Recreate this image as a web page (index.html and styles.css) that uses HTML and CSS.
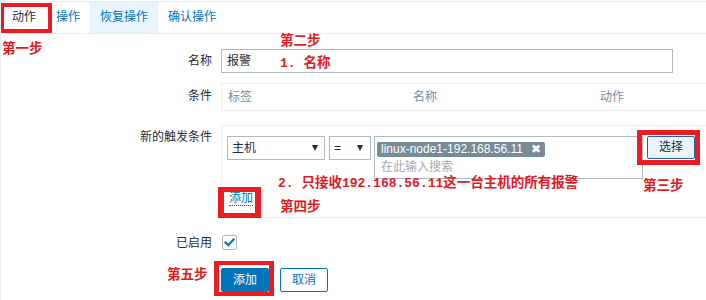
FILE: index.html
```html
<!DOCTYPE html>
<html lang="zh-CN">
<head>
<meta charset="utf-8">
<title>动作</title>
<link rel="stylesheet" href="styles.css">
</head>
<body>
<div class="page">
  <ul class="tabs">
    <li class="tab active">动作</li>
    <li class="tab">操作</li>
    <li class="tab hover">恢复操作</li>
    <li class="tab">确认操作</li>
  </ul>

  <div class="form">
    <div class="row row-name">
      <div class="label">名称</div>
      <div class="field">
        <div class="text-input">报警</div>
      </div>
    </div>

    <div class="row row-cond">
      <div class="label">条件</div>
      <div class="field">
        <div class="cond-table">
          <span class="col col-tag">标签</span>
          <span class="col col-name">名称</span>
          <span class="col col-act">动作</span>
        </div>
      </div>
    </div>

    <div class="row row-new">
      <div class="label">新的触发条件</div>
      <div class="field">
        <div class="new-box">
          <div class="new-line">
            <div class="select sel-type">主机<span class="arrow"></span></div>
            <div class="select sel-op">=<span class="arrow"></span></div>
            <div class="multi">
              <span class="tag">linux-node1-192.168.56.11<span class="tag-x">✖</span></span>
              <div class="placeholder">在此输入搜索</div>
            </div>
            <div class="btn-select">选择</div>
          </div>
          <a class="link-add">添加</a>
        </div>
      </div>
    </div>

    <div class="row row-enabled">
      <div class="label">已启用</div>
      <div class="field">
        <span class="checkbox">
          <svg width="13" height="13" viewBox="0 0 13 13"><polyline points="2.5,6.5 5.2,9.2 10.5,3.6" fill="none" stroke="#0275b8" stroke-width="2.2" stroke-linecap="square"/></svg>
        </span>
      </div>
    </div>

    <div class="row row-buttons">
      <div class="label"></div>
      <div class="field buttons">
        <div class="btn btn-primary">添加</div>
        <div class="btn btn-alt">取消</div>
      </div>
    </div>
  </div>

  <div class="note note-1">第一步</div>
  <div class="note note-2">第二步</div>
  <div class="note note-name"><span class="mono">1. </span>名称</div>
  <div class="note note-host"><span class="mono">2. </span>只接收<span class="mono">192.168.56.11</span>这一台主机的所有报警</div>
  <div class="note note-3">第三步</div>
  <div class="note note-4">第四步</div>
  <div class="note note-5">第五步</div>

  <div class="redbox rb-tab"></div>
  <div class="redbox rb-select"></div>
  <div class="redbox rb-link"></div>
  <div class="redbox rb-submit"></div>
</div>
</body>
</html>
```

FILE: styles.css
```css
html, body {
  margin: 0;
  padding: 0;
  background: #ffffff;
  overflow: hidden;
}

body {
  font-family: "Liberation Sans", Arial, "Noto Sans CJK SC", sans-serif;
  font-size: 12px;
  color: #1f2c33;
}

.page {
  position: relative;
  width: 706px;
  height: 300px;
  overflow: hidden;
  border-left: 1px solid #ebeef0;
  box-sizing: border-box;
}

/* tabs */
.tabs {
  list-style: none;
  margin: 1px 0 0 0;
  padding: 0 0 0 1px;
  display: flex;
  border-top: 1px solid #ebeef0;
  border-bottom: 1px solid #ebeef0;
  height: 31px;
}

.tab {
  padding: 0 10px;
  line-height: 31px;
  color: #0275b8;
}

.tab.active {
  color: #1f2c33;
}

.tab.hover {
  background: #e8f5ff;
}

/* form rows */
.form {
  padding-top: 15px;
}

.row {
  display: grid;
  grid-template-columns: 211px 520px;
  column-gap: 9px;
  align-items: start;
}

.label {
  text-align: right;
  line-height: 14px;
  padding-top: 5px;
}

.row-cond {
  margin-top: 10px;
}

.row-cond .label {
  padding-top: 6px;
}

.row-new {
  margin-top: 14px;
}

.row-new .label {
  padding-top: 5px;
}

.row-enabled {
  margin-top: 17px;
  align-items: center;
}

.row-enabled .label {
  padding-top: 0;
  line-height: 15px;
}

.row-buttons {
  margin-top: 16px;
}

.text-input {
  width: 452px;
  height: 24px;
  box-sizing: border-box;
  border: 1px solid #acbbc2;
  padding: 0 5px;
  line-height: 22px;
}

/* conditions table */
.cond-table {
  height: 28px;
  box-sizing: border-box;
  border: 1px solid #ebeef0;
  border-right: 0;
  display: flex;
  line-height: 26px;
  color: #768d99;
}

.col {
  padding-left: 6px;
}

.col-tag { width: 179px; }
.col-name { width: 181px; }
.col-act { width: 100px; }

/* new condition box */
.new-box {
  height: 93px;
  box-sizing: border-box;
  border: 1px solid #ebeef0;
  border-right: 0;
  padding: 10px 0 0 5px;
}

.new-line {
  display: flex;
  align-items: flex-start;
}

.select {
  position: relative;
  height: 24px;
  box-sizing: border-box;
  border: 1px solid #acbbc2;
  line-height: 22px;
  padding-left: 4px;
}

.sel-type {
  width: 98px;
}

.sel-op {
  width: 42px;
  margin-left: 4px;
}

.arrow {
  position: absolute;
  top: 8px;
  right: 6px;
  width: 0;
  height: 0;
  border-left: 3px solid transparent;
  border-right: 3px solid transparent;
  border-top: 6px solid #1f2c33;
}

.sel-op .arrow {
  right: 7px;
}

.multi {
  width: 269px;
  height: 43px;
  box-sizing: border-box;
  border: 1px solid #acbbc2;
  margin-left: 3px;
  padding: 5px 0 0 2px;
}

.tag {
  display: inline-block;
  height: 15px;
  line-height: 15px;
  background: #768d99;
  color: #ffffff;
  border-radius: 2px;
  padding: 0 4px 0 4px;
  vertical-align: top;
}

.tag-x {
  margin-left: 8px;
  font-family: "DejaVu Sans", sans-serif;
  font-size: 12px;
  line-height: 15px;
}

.placeholder {
  color: #a2acb1;
  line-height: 14px;
  margin-top: 3px;
  padding-left: 4px;
}

.btn-select {
  width: 48px;
  height: 23px;
  box-sizing: border-box;
  margin-left: 4px;
  background: #e8f5ff;
  border: 1px solid #1f65a6;
  border-radius: 2px;
  text-align: center;
  line-height: 21px;
  color: #1f2c33;
}

.link-add {
  display: inline-block;
  margin-top: 12px;
  margin-left: 2px;
  line-height: 14px;
  color: #0275b8;
  border-bottom: 1px dotted #0275b8;
}

/* checkbox */
.checkbox {
  display: inline-flex;
  align-items: center;
  justify-content: center;
  width: 15px;
  height: 15px;
  box-sizing: border-box;
  border: 1px solid #acbbc2;
  border-radius: 2px;
  margin-left: 1px;
}

/* buttons */
.buttons {
  display: flex;
  gap: 11px;
}

.btn {
  width: 48px;
  height: 24px;
  box-sizing: border-box;
  border: 1px solid #0275b8;
  border-radius: 2px;
  text-align: center;
  line-height: 22px;
}

.btn-primary {
  background: #0275b8;
  color: #ffffff;
}

.btn-alt {
  background: #ffffff;
  color: #0275b8;
}

/* annotations (overlay) */
.note {
  position: absolute;
  color: #e31a21;
  font-family: "Noto Sans CJK SC", sans-serif;
  font-weight: 700;
  font-size: 13.5px;
  line-height: 16px;
  white-space: nowrap;
}

.note .mono {
  font-family: "Liberation Mono", monospace;
  font-size: 13px;
}

.note-1 { left: 1px; top: 39px; }
.note-2 { left: 279px; top: 31px; }
.note-name { left: 279px; top: 53px; }
.note-host { left: 277px; top: 173px; }
.note-3 { left: 642px; top: 176px; }
.note-4 { left: 279px; top: 197px; }
.note-5 { left: 166px; top: 265px; }

.redbox {
  position: absolute;
  border: 4px solid #ec1c24;
  box-sizing: border-box;
}

.rb-tab { left: -1px; top: 3px; width: 52px; height: 30px; }
.rb-select { left: 636px; top: 130px; width: 63px; height: 35px; border-width: 5px; }
.rb-link { left: 217px; top: 187px; width: 43px; height: 31px; border-width: 5px 6px; }
.rb-submit { left: 213px; top: 261px; width: 60px; height: 35px; border-width: 4px 5px; }
```
